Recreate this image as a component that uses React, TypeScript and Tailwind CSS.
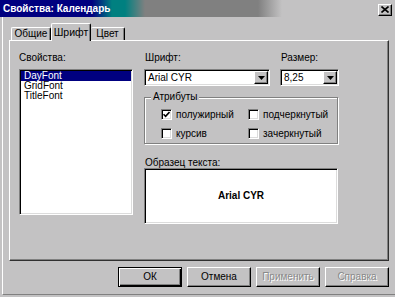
import React from "react";

const raised =
  "border border-t-white border-l-white border-r-black border-b-black shadow-[inset_-1px_-1px_0_#808080]";
const sunken =
  "border border-t-[#808080] border-l-[#808080] border-r-white border-b-white shadow-[inset_1px_1px_0_#000,inset_-1px_-1px_0_#dcdcdc]";

function Arrow() {
  return (
    <div className={`w-[14px] h-full flex items-center justify-center bg-[#c3c2c3] ${raised}`}>
      <svg width="7" height="4" viewBox="0 0 7 4">
        <path d="M0 0h7L3.5 4z" fill="#000" />
      </svg>
    </div>
  );
}

function Check({ checked, label }: { checked?: boolean; label: string }) {
  return (
    <div className="flex items-center gap-[4px] h-[11px]">
      <div className={`w-[11px] h-[11px] bg-white ${sunken} flex items-center justify-center`}>
        {checked && (
          <svg width="7" height="7" viewBox="0 0 7 7">
            <path d="M0.5 3.2L2.6 5.3L6.5 1" stroke="#000" strokeWidth="1.6" fill="none" />
          </svg>
        )}
      </div>
      <span className="leading-none">{label}</span>
    </div>
  );
}

function Btn({ label, def, disabled }: { label: string; def?: boolean; disabled?: boolean }) {
  const base = def
    ? "border border-black shadow-[inset_1px_1px_0_#fff,inset_-1px_-1px_0_#000,inset_-2px_-2px_0_#808080]"
    : raised;
  return (
    <div
      className={`w-[64px] h-[20px] flex items-center justify-center bg-[#c3c2c3] ${base} ${
        disabled ? "text-[#8a8a8a] [text-shadow:1px_1px_0_#fff]" : "text-black"
      }`}
    >
      <span className="leading-none">{label}</span>
    </div>
  );
}

export default function App() {
  return (
    <div className="w-[395px] h-[297px] bg-[#c3c2c3] overflow-hidden font-['Liberation_Sans',Arial,sans-serif] text-[10px] text-black">
      {/* title bar */}
      <div className="h-[17px] flex items-center justify-between bg-[linear-gradient(to_right,#000080_0px,#000080_92px,#008080_112px,#008080_125px,#808080_145px,#808080_258px,#c3c2c3_282px)]">
        <span className="pl-[3px] text-white font-bold text-[10px] leading-none">
          Свойства: Календарь
        </span>
        <div className={`mr-[3px] mt-[2px] w-[14px] h-[12px] bg-[#c3c2c3] ${raised} flex items-center justify-center`}>
          <svg width="8" height="7" viewBox="0 0 8 7">
            <path d="M0.5 0.5L7.5 6.5M7.5 0.5L0.5 6.5" stroke="#000" strokeWidth="1.6" />
          </svg>
        </div>
      </div>

      {/* body */}
      <div className="ml-[2px] h-[278px] border-l border-white border-b border-b-[#808080] pl-[6px] pt-[6px] flex flex-col">
        {/* tabs */}
        <div className="h-[17px] flex items-end pl-[2px] relative z-10">
          <div className="w-[40px] h-[13px] border-t border-l border-white border-r border-r-black rounded-t-[2px] flex items-center justify-center shadow-[inset_-1px_0_0_#808080]">
            <span className="leading-none">Общие</span>
          </div>
          <div className="w-[40px] h-[18px] -mb-[1px] bg-[#c3c2c3] border-t border-l border-white border-r border-r-black rounded-t-[2px] flex items-start justify-center pt-[3px] shadow-[inset_-1px_0_0_#808080]">
            <span className="leading-none text-[10.5px]">Шрифт</span>
          </div>
          <div className="w-[34px] h-[13px] border-t border-white border-r border-r-black rounded-t-[2px] flex items-center justify-center shadow-[inset_-1px_0_0_#808080]">
            <span className="leading-none">Цвет</span>
          </div>
        </div>

        {/* panel */}
        <div className="w-[380px] h-[221px] border border-t-white border-l-white border-r-[#303030] border-b-[#303030] shadow-[inset_-1px_-1px_0_#808080] pt-[11px] pl-[9px] flex gap-[11px]">
          {/* left column */}
          <div className="w-[114px] flex flex-col">
            <div className="h-[17px] leading-[10px] pt-[1px]">Свойства:</div>
            <div className={`h-[146px] bg-white ${sunken} p-[1px] flex flex-col`}>
              <div className="h-[10px] bg-[#000080] text-white leading-[10px] pl-[3px]">DayFont</div>
              <div className="h-[10px] leading-[10px] pl-[3px]">GridFont</div>
              <div className="h-[10px] leading-[10px] pl-[3px]">TitleFont</div>
            </div>
          </div>

          {/* right column */}
          <div className="w-[195px] flex flex-col">
            <div className="flex gap-[10px]">
              <div className="w-[126px] flex flex-col">
                <div className="h-[17px] leading-[10px] pt-[1px] pl-[1px]">Шрифт:</div>
                <div className={`h-[17px] bg-white ${sunken} flex items-stretch p-[1px]`}>
                  <div className="flex-1 flex items-center pl-[2px] leading-none">Arial CYR</div>
                  <Arrow />
                </div>
              </div>
              <div className="w-[59px] flex flex-col">
                <div className="h-[17px] leading-[10px] pt-[1px] pl-[1px]">Размер:</div>
                <div className={`h-[17px] bg-white ${sunken} flex items-stretch p-[1px]`}>
                  <div className="flex-1 flex items-center pl-[2px] leading-none">8,25</div>
                  <Arrow />
                </div>
              </div>
            </div>

            {/* group */}
            <div className="relative mt-[11px] h-[47px] w-[194px] border border-[#808080] shadow-[1px_1px_0_#fff,inset_1px_1px_0_#fff]">
              <span className="absolute -top-[6px] left-[6px] px-[2px] bg-[#c3c2c3] leading-[10px]">Атрибуты</span>
              <div className="grid grid-cols-[87px_1fr] gap-y-[8px] pl-[16px] pt-[11px]">
                <Check checked label="полужирный" />
                <Check label="подчеркнутый" />
                <Check label="курсив" />
                <Check label="зачеркнутый" />
              </div>
            </div>

            <div className="mt-[14px] h-[10px] leading-[10px] pl-[1px]">Образец текста:</div>
            <div className={`h-[56px] w-[194px] bg-white ${sunken} flex items-center justify-center`}>
              <span className="font-bold leading-none">Arial CYR</span>
            </div>
          </div>
        </div>

        {/* buttons */}
        <div className="w-[380px] mt-[6px] flex justify-end gap-[5px]">
          <Btn label="ОК" def />
          <Btn label="Отмена" />
          <Btn label="Применить" disabled />
          <Btn label="Справка" disabled />
        </div>
      </div>
    </div>
  );
}
